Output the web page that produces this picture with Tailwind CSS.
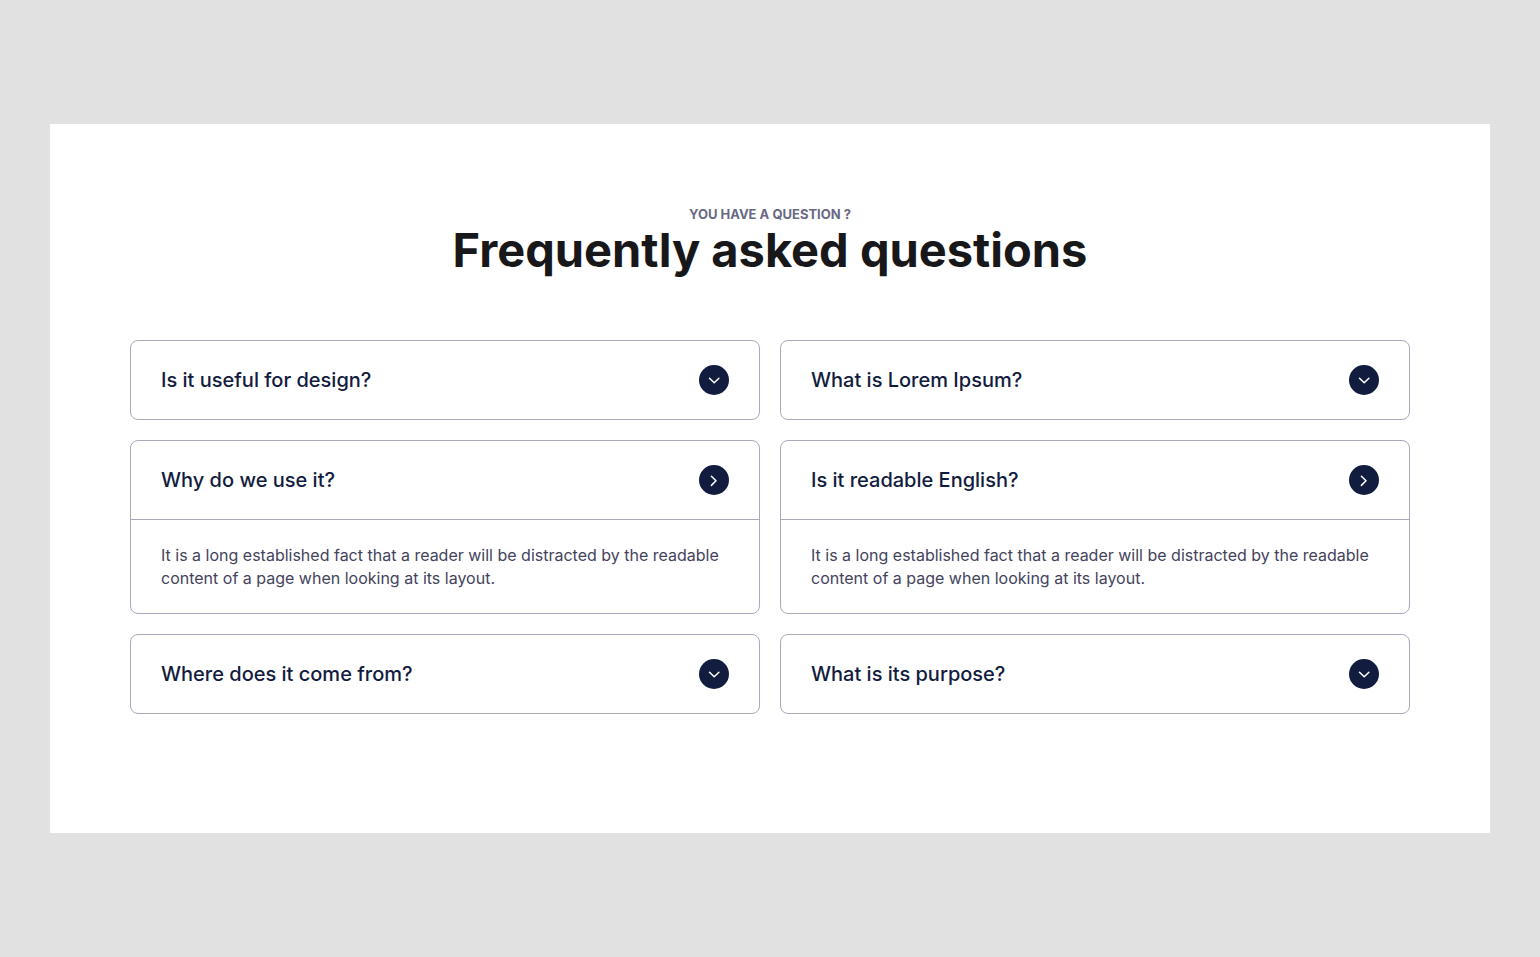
<!DOCTYPE html>
<html lang="en">
<head>
<meta charset="utf-8">
<meta name="viewport" content="width=device-width, initial-scale=1">
<title>Frequently asked questions</title>
<script src="https://cdn.jsdelivr.net/npm/@tailwindcss/browser@4"></script>
</head>
<body class="flex min-h-screen items-center bg-[#e1e1e1] px-[50px] font-['Inter',sans-serif]">
<svg class="hidden" aria-hidden="true">
  <symbol id="down" viewBox="0 0 30 30"><circle cx="15" cy="15" r="15" fill="#121c3e"/><path d="M10.500 13.200l4.700 4.600 4.700-4.600" fill="none" stroke="#fff" stroke-width="1.500" stroke-linecap="round" stroke-linejoin="round"/></symbol>
  <symbol id="right" viewBox="0 0 30 30"><circle cx="15" cy="15" r="15" fill="#121c3e"/><path d="M12.400 11.200l4.600 4.600-4.600 4.600" fill="none" stroke="#fff" stroke-width="1.500" stroke-linecap="round" stroke-linejoin="round"/></symbol>
</svg>
<main class="w-full bg-white px-5 pt-20 pb-[119px] lg:px-20">
  <header class="text-center">
    <p class="text-[13px] font-bold leading-5 text-[#696984]">YOU HAVE A QUESTION ?</p>
    <h1 class="text-[47px] font-bold leading-[52px] text-[#18181b]">Frequently asked questions</h1>
  </header>
  <div class="mt-16 grid gap-5 text-[#121c3e] lg:grid-cols-2">
    <section class="rounded-lg border border-[#a9a9bc]">
      <h2><button type="button" aria-expanded="false" class="flex h-[78px] w-full items-center justify-between px-[30px] text-left text-xl font-medium">Is it useful for design?<svg class="size-[30px] shrink-0"><use href="#down"/></svg></button></h2>
    </section>
    <section class="rounded-lg border border-[#a9a9bc]">
      <h2><button type="button" aria-expanded="false" class="flex h-[78px] w-full items-center justify-between px-[30px] text-left text-xl font-medium">What is Lorem Ipsum?<svg class="size-[30px] shrink-0"><use href="#down"/></svg></button></h2>
    </section>
    <section class="rounded-lg border border-[#a9a9bc]">
      <h2><button type="button" aria-expanded="true" class="flex h-[78px] w-full items-center justify-between px-[30px] text-left text-xl font-medium">Why do we use it?<svg class="size-[30px] shrink-0"><use href="#right"/></svg></button></h2>
      <p class="border-t border-[#a9a9bc] px-[30px] pt-6 pb-[23px] text-base leading-[23px] text-[#44435c]">It is a long established fact that a reader will be distracted by the readable content of a page when looking at its layout.</p>
    </section>
    <section class="rounded-lg border border-[#a9a9bc]">
      <h2><button type="button" aria-expanded="true" class="flex h-[78px] w-full items-center justify-between px-[30px] text-left text-xl font-medium">Is it readable English?<svg class="size-[30px] shrink-0"><use href="#right"/></svg></button></h2>
      <p class="border-t border-[#a9a9bc] px-[30px] pt-6 pb-[23px] text-base leading-[23px] text-[#44435c]">It is a long established fact that a reader will be distracted by the readable content of a page when looking at its layout.</p>
    </section>
    <section class="rounded-lg border border-[#a9a9bc]">
      <h2><button type="button" aria-expanded="false" class="flex h-[78px] w-full items-center justify-between px-[30px] text-left text-xl font-medium">Where does it come from?<svg class="size-[30px] shrink-0"><use href="#down"/></svg></button></h2>
    </section>
    <section class="rounded-lg border border-[#a9a9bc]">
      <h2><button type="button" aria-expanded="false" class="flex h-[78px] w-full items-center justify-between px-[30px] text-left text-xl font-medium">What is its purpose?<svg class="size-[30px] shrink-0"><use href="#down"/></svg></button></h2>
    </section>
  </div>
</main>
</body>
</html>
